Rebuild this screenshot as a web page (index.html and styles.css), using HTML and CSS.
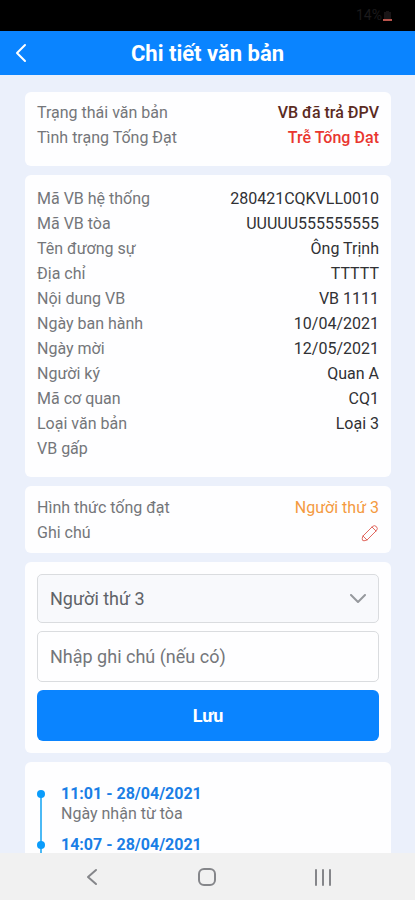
FILE: index.html
```html
<!DOCTYPE html>
<html lang="vi">
<head>
<meta charset="utf-8">
<meta name="viewport" content="width=device-width, initial-scale=1">
<title>Chi tiết văn bản</title>
<link rel="stylesheet" href="styles.css">
</head>
<body>
<div class="status-bar">
  <span>14%</span>
  <svg class="battery" viewBox="0 0 9 12" aria-hidden="true"><path d="M1 2h2V1h3v1h2v7H1z" fill="#191516"/><path d="M0 9h9v2H0z" fill="#b9544c"/></svg>
</div>
<header class="app-bar">
  <button class="back" type="button" aria-label="Quay lại"><svg viewBox="0 0 12 20" aria-hidden="true"><path d="M10 2 2 10l8 8"/></svg></button>
  <h1>Chi tiết văn bản</h1>
</header>
<main class="content">
  <section class="card">
    <dl class="rows">
      <div><dt>Trạng thái văn bản</dt><dd class="brown">VB đã trả ĐPV</dd></div>
      <div><dt>Tình trạng Tống Đạt</dt><dd class="red">Trễ Tống Đạt</dd></div>
    </dl>
  </section>
  <section class="card details">
    <dl class="rows">
      <div><dt>Mã VB hệ thống</dt><dd>280421CQKVLL0010</dd></div>
      <div><dt>Mã VB tòa</dt><dd>UUUUU555555555</dd></div>
      <div><dt>Tên đương sự</dt><dd>Ông Trịnh</dd></div>
      <div><dt>Địa chỉ</dt><dd>TTTTT</dd></div>
      <div><dt>Nội dung VB</dt><dd>VB 1111</dd></div>
      <div><dt>Ngày ban hành</dt><dd>10/04/2021</dd></div>
      <div><dt>Ngày mời</dt><dd>12/05/2021</dd></div>
      <div><dt>Người ký</dt><dd>Quan A</dd></div>
      <div><dt>Mã cơ quan</dt><dd>CQ1</dd></div>
      <div><dt>Loại văn bản</dt><dd>Loại 3</dd></div>
      <div><dt>VB gấp</dt><dd></dd></div>
    </dl>
  </section>
  <section class="card compact">
    <dl class="rows">
      <div><dt>Hình thức tống đạt</dt><dd class="orange">Người thứ 3</dd></div>
      <div><dt>Ghi chú</dt><dd class="action"><button class="edit" type="button" aria-label="Sửa ghi chú"><svg viewBox="0 0 18 18" aria-hidden="true"><path d="M2 12 11.600 2.400Q13.500.8 15.400 2.600 17.200 4.500 15.600 6.400L6 16 3 16.800Q1 17 1.200 15ZM11 3l4 4M2 12l4 4"/></svg></button></dd></div>
    </dl>
  </section>
  <form class="card form">
    <div class="select-box">
      <select aria-label="Hình thức tống đạt"><option>Người thứ 3</option></select>
      <svg viewBox="0 0 16 10" aria-hidden="true"><path d="m1 1 7 7 7-7"/></svg>
    </div>
    <input type="text" aria-label="Ghi chú" placeholder="Nhập ghi chú (nếu có)">
    <button class="save" type="button">Lưu</button>
  </form>
  <section class="card history">
    <ol class="timeline">
      <li><time>11:01 - 28/04/2021</time><p>Ngày nhận từ tòa</p></li>
      <li><time>14:07 - 28/04/2021</time></li>
    </ol>
  </section>
</main>
<nav class="system-nav">
  <button type="button" aria-label="Trở về"><svg viewBox="0 0 20 20" aria-hidden="true"><path d="m14 3-8 7 8 7"/></svg></button>
  <button type="button" aria-label="Màn hình chính"><svg viewBox="0 0 20 20" aria-hidden="true"><rect x="2" y="2" width="16" height="16" rx="5"/></svg></button>
  <button type="button" aria-label="Ứng dụng gần đây"><svg viewBox="0 0 20 20" aria-hidden="true"><path d="M3 3v15M10 3v15M17 3v15"/></svg></button>
</nav>
</body>
</html>
```
FILE: styles.css
```css
* {
  box-sizing: border-box;
}

body {
  margin: 0;
  height: 100vh;
  display: flex;
  flex-direction: column;
  overflow: hidden;
  background: #ebf0fb;
  color: #303134;
  font: 16px/25px Roboto, "Noto Sans", sans-serif;
}

button,
input,
select {
  font: inherit;
}

button {
  padding: 0;
  border: 0;
  background: none;
}

svg {
  display: block;
  fill: none;
  stroke-linecap: round;
  stroke-linejoin: round;
}

.status-bar {
  flex: none;
  height: 31px;
  padding: 0 23px 0 0;
  display: flex;
  justify-content: flex-end;
  align-items: center;
  gap: 1px;
  background: #000;
  color: #1b1a1b;
  font-size: 14px;
}

.battery {
  width: 9px;
  height: 12px;
}

.app-bar {
  flex: none;
  height: 44px;
  padding: 0 15px;
  display: grid;
  grid-template-columns: 12px 1fr 12px;
  align-items: center;
  background: #0a84ff;
  color: #fff;
}

.app-bar h1 {
  margin: 0;
  text-align: center;
  font-size: 22px;
  font-weight: 700;
}

.back svg {
  width: 12px;
  height: 20px;
  stroke: #fff;
  stroke-width: 2;
}

.content {
  flex: 1;
  min-height: 0;
  overflow: hidden;
  padding: 17px 24px 0 25px;
  display: flex;
  flex-direction: column;
  gap: 9px;
}

.card {
  flex: none;
  padding: 8px 12px 16px;
  border-radius: 6px;
  background: #fefeff;
}

.details {
  padding-top: 11px;
}

.compact {
  padding-top: 9px;
  padding-bottom: 8px;
}

.rows {
  margin: 0;
}

.rows div {
  display: flex;
  justify-content: space-between;
  min-height: 25px;
}

dt {
  color: #74767a;
}

dd {
  margin: 0;
  text-align: right;
}

.brown,
.red {
  font-weight: 500;
}

.brown {
  color: #5b2b1f;
}

.red {
  color: #e9362f;
}

.orange {
  color: #f49a3f;
}

.action {
  display: flex;
  align-items: center;
}

.edit svg {
  width: 18px;
  height: 18px;
  stroke: #e1685f;
  stroke-width: 1;
}

.form {
  padding: 12px;
  display: grid;
  gap: 8px;
}

.select-box {
  display: grid;
  align-items: center;
}

.select-box select,
.select-box svg {
  grid-area: 1 / 1;
}

.select-box svg {
  width: 16px;
  height: 10px;
  margin-right: 13px;
  justify-self: end;
  pointer-events: none;
  stroke: #96999d;
  stroke-width: 2;
}

.form select,
.form input {
  width: 100%;
  height: 51px;
  padding: 0 12px;
  border: 1px solid #dadcdf;
  border-radius: 5px;
  background: #fefeff;
  color: #5f6368;
  font-size: 18px;
}

.form select {
  height: 49px;
  appearance: none;
  background: #f8f9fc;
}

.form input::placeholder {
  color: #74767a;
  opacity: 1;
}

.save {
  height: 51px;
  border-radius: 6px;
  background: #0a84ff;
  color: #fff;
  font-size: 18px;
  font-weight: 700;
}

.history {
  padding-top: 22px;
}

.timeline {
  margin: 0;
  padding: 0;
  list-style: none;
  line-height: 20px;
}

.timeline li {
  position: relative;
  min-height: 51px;
  padding-left: 24px;
}

.timeline li::before,
.timeline li::after {
  content: "";
  position: absolute;
}

.timeline li::before {
  top: 10px;
  bottom: -10px;
  left: 3px;
  width: 2px;
  background: #4bb9f5;
}

.timeline li::after {
  top: 6px;
  left: 0;
  width: 8px;
  height: 8px;
  border-radius: 50%;
  background: #0a9cfb;
}

.timeline time {
  display: block;
  color: #1a7ee6;
  font-weight: 700;
}

.timeline p {
  margin: 0;
  color: #74767a;
}

.system-nav {
  flex: none;
  height: 47px;
  padding: 0 34px;
  display: grid;
  grid-template-columns: repeat(3, 1fr);
  align-items: center;
  background: #f1f1f1;
}

.system-nav svg {
  width: 20px;
  height: 20px;
  margin: 0 auto;
  stroke: #85868a;
  stroke-width: 2;
}
```
